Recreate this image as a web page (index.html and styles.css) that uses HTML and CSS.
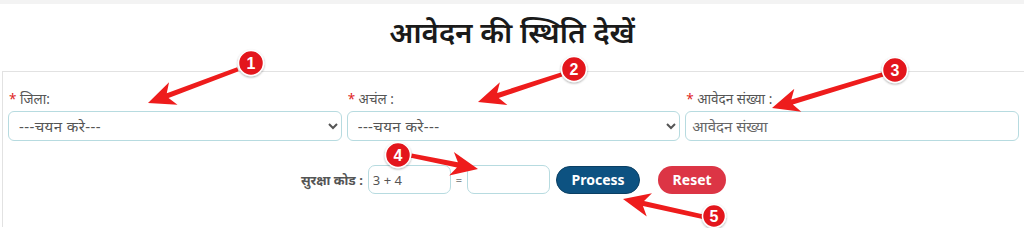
FILE: index.html
```html
<!DOCTYPE html>
<html lang="hi">
<head>
    <meta charset="UTF-8">
    <meta name="viewport" content="width=device-width, initial-scale=1.0">
    <title>आवेदन की स्थिति देखें</title>
    <link rel="stylesheet" href="styles.css">
</head>
<body>
    <div class="topbar"></div>

    <h1 class="page-title">आवेदन की स्थिति देखें</h1>

    <div class="card">
        <div class="form-row">
            <div class="field">
                <label><span class="req">*</span> जिला:</label>
                <select class="control">
                    <option>---चयन करे---</option>
                </select>
            </div>
            <div class="field">
                <label><span class="req">*</span> अचंल :</label>
                <select class="control">
                    <option>---चयन करे---</option>
                </select>
            </div>
            <div class="field">
                <label><span class="req">*</span> आवेदन संख्या :</label>
                <input class="control" type="text" placeholder="आवेदन संख्या">
            </div>
        </div>

        <div class="captcha-row">
            <label class="captcha-label">सुरक्षा कोड :</label>
            <input class="control small" type="text" value="3 + 4" readonly>
            <span class="equals">=</span>
            <input class="control small" type="text">
            <button class="btn btn-process">Process</button>
            <button class="btn btn-reset">Reset</button>
        </div>
    </div>

    <!-- step markers drawn over the form -->
    <svg class="overlay" width="1024" height="228" viewBox="0 0 1024 228">
        <defs>
            <filter id="shadow" x="-50%" y="-50%" width="200%" height="200%">
                <feDropShadow dx="0" dy="1" stdDeviation="1" flood-opacity="0.35"/>
            </filter>
        </defs>

        <g class="arrow" transform="translate(148 103) rotate(159.4)">
            <path d="M0,0 L-27,-12 L-21,-2.6 L-96,-2.2 L-96,2.2 L-21,2.6 L-27,12 Z"/>
        </g>
        <g class="arrow" transform="translate(478 102) rotate(161.8)">
            <path d="M0,0 L-27,-12 L-21,-2.6 L-88,-2.2 L-88,2.2 L-21,2.6 L-27,12 Z"/>
        </g>
        <g class="arrow" transform="translate(772 108) rotate(163.1)">
            <path d="M0,0 L-27,-12 L-21,-2.6 L-116,-2.2 L-116,2.2 L-21,2.6 L-27,12 Z"/>
        </g>
        <g class="arrow" transform="translate(478 169) rotate(11.3)">
            <path d="M0,0 L-27,-12 L-21,-2.6 L-68,-2.2 L-68,2.2 L-21,2.6 L-27,12 Z"/>
        </g>
        <g class="arrow" transform="translate(623 199) rotate(-167.5)">
            <path d="M0,0 L-27,-12 L-21,-2.6 L-82,-2.2 L-82,2.2 L-21,2.6 L-27,12 Z"/>
        </g>

        <g class="badge" transform="translate(251 63)">
            <circle r="12.5"/>
            <text y="5.5">1</text>
        </g>
        <g class="badge" transform="translate(574 69)">
            <circle r="12.5"/>
            <text y="5.5">2</text>
        </g>
        <g class="badge" transform="translate(895 70)">
            <circle r="12.5"/>
            <text y="5.5">3</text>
        </g>
        <g class="badge" transform="translate(398 155)">
            <circle r="12.5"/>
            <text y="5.5">4</text>
        </g>
        <g class="badge" transform="translate(714 216)">
            <circle r="11.5"/>
            <text y="5.5">5</text>
        </g>
    </svg>
</body>
</html>
```

FILE: styles.css
```css
body {
    margin: 0;
    padding: 0;
    background: #fff;
    font-family: "Noto Sans", "Noto Sans Devanagari", sans-serif;
    position: relative;
    width: 1024px;
    height: 228px;
    overflow: hidden;
}

.topbar {
    height: 4px;
    background: #f3f3f3;
}

.page-title {
    margin: 0;
    padding-top: 8px;
    height: 59px;
    text-align: center;
    font-size: 29.5px;
    line-height: 40px;
    font-weight: 600;
    color: #1a1a1a;
}

.card {
    margin-left: 2px;
    border-top: 1px solid #e2e2e2;
    border-left: 1px solid #e2e2e2;
    padding: 17px 5px 0 5px;
    height: 138px;
}

.form-row {
    display: grid;
    grid-template-columns: 1fr 1fr 1fr;
    gap: 5px;
}

.field label {
    display: block;
    font-size: 13.5px;
    line-height: 20px;
    color: #555;
    margin-bottom: 2px;
    padding-left: 1px;
}

.req {
    color: #e02424;
}

.control {
    box-sizing: border-box;
    width: 100%;
    height: 30px;
    border: 1px solid #b7dbe0;
    border-radius: 6px;
    background: #fff;
    font-family: inherit;
    font-size: 15px;
    color: #555;
    padding: 0 6px;
}

select.control {
    letter-spacing: 0.4px;
}

.control::placeholder {
    color: #666;
}

.captcha-row {
    display: flex;
    align-items: center;
    justify-content: center;
    margin-top: 24px;
}

.captcha-label {
    font-size: 13px;
    font-weight: 700;
    color: #555;
    margin-right: 5px;
}

.control.small {
    width: 83px;
    height: 29px;
    border-radius: 7px;
    padding: 0 4px;
    font-size: 13px;
}

.equals {
    font-size: 11px;
    color: #888;
    margin: 0 5px;
}

.btn {
    height: 28px;
    border: none;
    border-radius: 14px;
    color: #fff;
    font-family: "Noto Sans", sans-serif;
    font-size: 14px;
    font-weight: 700;
    padding: 0;
    cursor: pointer;
}

.btn-process {
    width: 84px;
    margin-left: 6px;
    background: #0d5281;
    border: 1px solid #0a3f63;
}

.btn-reset {
    width: 68px;
    margin-left: 18px;
    background: #dc3545;
}

.overlay {
    position: absolute;
    top: 0;
    left: 0;
    pointer-events: none;
}

.arrow path {
    fill: #ee1c1c;
}

.badge circle {
    fill: #e3151b;
    stroke: #fff;
    stroke-width: 1.5;
    filter: url(#shadow);
}

.badge text {
    fill: #fff;
    font-family: "Liberation Sans", Arial, sans-serif;
    font-size: 16px;
    font-weight: 700;
    text-anchor: middle;
}
```
